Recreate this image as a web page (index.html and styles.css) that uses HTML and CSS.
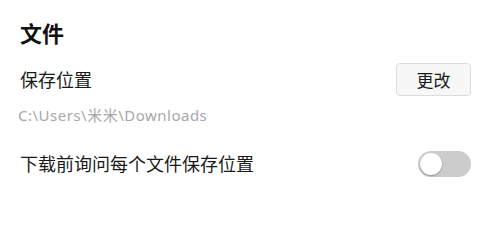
FILE: index.html
```html
<!DOCTYPE html>
<html lang="zh-CN">
<head>
<meta charset="utf-8">
<link rel="stylesheet" href="styles.css">
</head>
<body>
<section class="panel">
  <h2 class="title">文件</h2>
  <div class="row">
    <span class="label">保存位置</span>
    <button class="btn">更改</button>
  </div>
  <div class="path">C:\Users\米米\Downloads</div>
  <div class="row row-toggle">
    <span class="label">下载前询问每个文件保存位置</span>
    <span class="toggle"><span class="knob"></span></span>
  </div>
</section>
</body>
</html>
```
FILE: styles.css
```css
html, body {
  margin: 0;
  padding: 0;
  background: #ffffff;
}
body {
  font-family: "Noto Sans", "Noto Sans CJK SC", sans-serif;
  color: #1a1a1a;
}
.panel {
  padding: 18px 26px 0 20px;
}
.title {
  margin: 0;
  font-size: 22px;
  font-weight: 700;
  line-height: 30px;
  color: #111;
}
.row {
  display: flex;
  align-items: center;
  justify-content: space-between;
}
.row:first-of-type {
  margin-top: 15px;
}
.label {
  font-size: 18px;
  line-height: 24px;
}
.btn {
  width: 75px;
  height: 33px;
  padding: 0;
  border: 1px solid #dcdcdc;
  border-radius: 4px;
  background: #f7f7f7;
  font-family: inherit;
  font-size: 17px;
  color: #1a1a1a;
}
.path {
  margin-top: 9px;
  margin-left: -2px;
  font-size: 15px;
  letter-spacing: 0.5px;
  line-height: 20px;
  color: #a8a8a8;
}
.row-toggle {
  margin-top: 26px;
}
.toggle {
  position: relative;
  display: block;
  width: 53px;
  height: 26px;
  border-radius: 13px;
  background: #cccccc;
}
.knob {
  position: absolute;
  left: 2px;
  top: 2px;
  width: 22px;
  height: 22px;
  border-radius: 50%;
  background: #ffffff;
  box-shadow: 0 1px 2px rgba(0,0,0,0.3);
}
```
